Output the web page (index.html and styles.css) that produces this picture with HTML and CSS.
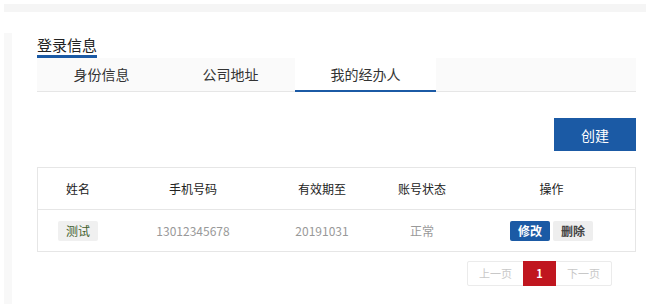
FILE: index.html
```html
<!DOCTYPE html>
<html lang="zh-CN">
<head>
<meta charset="utf-8">
<title>登录信息</title>
<link rel="stylesheet" href="styles.css">
</head>
<body>
<div class="page">
  <div class="topbar"></div>
  <div class="main">
    <div class="sidebar"></div>
    <div class="content">
      <div class="title">登录信息</div>
      <div class="tabs">
        <div class="tab tab-w1">身份信息</div>
        <div class="tab tab-w1">公司地址</div>
        <div class="tab tab-w2 active">我的经办人</div>
      </div>
      <div class="toolbar">
        <button class="btn-create">创建</button>
      </div>
      <div class="table">
        <div class="row head">
          <div class="c c1">姓名</div>
          <div class="c c2">手机号码</div>
          <div class="c c3">有效期至</div>
          <div class="c c4">账号状态</div>
          <div class="c c5">操作</div>
        </div>
        <div class="row body">
          <div class="c c1"><span class="tag">测试</span></div>
          <div class="c c2">13012345678</div>
          <div class="c c3">20191031</div>
          <div class="c c4">正常</div>
          <div class="c c5"><span class="btn-edit">修改</span><span class="btn-del">删除</span></div>
        </div>
      </div>
      <div class="pager-wrap">
        <div class="pager">
          <span class="pg pg-side">上一页</span>
          <span class="pg pg-cur">1</span>
          <span class="pg pg-side">下一页</span>
        </div>
      </div>
    </div>
  </div>
</div>
</body>
</html>
```
FILE: styles.css
```css
* { box-sizing: border-box; }
html, body { margin: 0; padding: 0; background: #fff; }
body {
  font-family: "Noto Sans CJK SC", "Noto Sans", sans-serif;
  color: #333;
  width: 646px;
  height: 304px;
  overflow: hidden;
}
.page { padding: 4px 0 0 4px; height: 304px; overflow: hidden; }
.topbar { height: 8px; background: #f5f5f5; }
.main { display: flex; }
.sidebar {
  width: 8px;
  margin-top: 21px;
  height: 271px;
  background: #f8f8f8;
}
.content {
  margin-left: 25px;
  width: 599px;
  padding-top: 20px;
}
.title {
  display: inline-block;
  font-size: 15px;
  line-height: 20px;
  color: #222;
  border-bottom: 3px solid #1b5aa5;
}
.tabs {
  display: flex;
  background: #fafafa;
  border-bottom: 1px solid #e6e6e6;
  height: 34px;
}
.tab {
  height: 33px;
  line-height: 33px;
  text-align: center;
  font-size: 14px;
  color: #333;
}
.tab-w1 { width: 129px; }
.tab-w2 { width: 141px; }
.tab.active {
  background: #fff;
  box-shadow: inset 0 -2px 0 #1b5aa5;
  height: 34px;
}
.toolbar {
  display: flex;
  justify-content: flex-end;
  margin-top: 26px;
}
.btn-create {
  width: 82px;
  height: 33px;
  border: 0;
  background: #1b5aa5;
  color: #fff;
  font-family: inherit;
  font-size: 14px;
  padding: 0;
}
.table {
  margin-top: 16px;
  border: 1px solid #e6e6e6;
}
.row { display: flex; align-items: center; }
.row.head { height: 42px; border-bottom: 1px solid #e6e6e6; font-size: 12px; color: #222; }
.row.body { height: 41px; font-size: 12px; color: #999; }
.c { text-align: center; }
.c1 { width: 80px; }
.c2 { width: 150px; }
.c3 { width: 108px; }
.c4 { width: 92px; }
.c5 { width: 167px; display: flex; justify-content: center; gap: 3px; }
.tag {
  display: inline-block;
  width: 40px;
  height: 20px;
  line-height: 20px;
  background: #f0f0f0;
  color: #3f5e2c;
  font-size: 12px;
  border-radius: 2px;
}
.btn-edit, .btn-del {
  display: inline-block;
  width: 40px;
  height: 20px;
  line-height: 20px;
  font-size: 12px;
  border-radius: 2px;
  font-weight: bold;
}
.btn-edit { background: #1b5aa5; color: #fff; }
.btn-del { background: #eeeeee; color: #444; }
.pager-wrap {
  display: flex;
  justify-content: flex-end;
  margin-top: 9px;
  padding-right: 24px;
}
.pager {
  display: flex;
  border: 1px solid #ebebeb;
  border-radius: 2px;
  height: 25px;
}
.pg {
  display: inline-block;
  height: 23px;
  line-height: 23px;
  text-align: center;
  font-size: 11px;
}
.pg-side { width: 55px; color: #c8c8c8; }
.pg-cur {
  width: 33px;
  background: #c0161f;
  color: #fff;
  font-weight: bold;
  height: 25px;
  line-height: 25px;
  margin-top: -1px;
}
```
